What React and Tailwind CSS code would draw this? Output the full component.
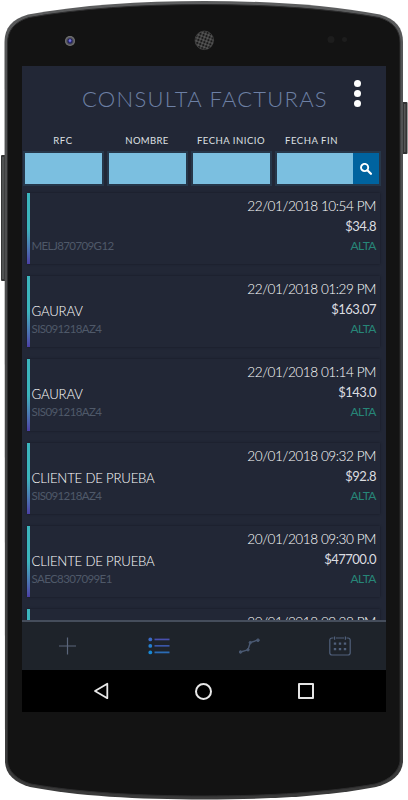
import clsx from "clsx";

const filters = [
  { label: "RFC", box: "w-[81px]", text: "w-[80px] tracking-[0.7px]" },
  { label: "NOMBRE", box: "w-[81px]", text: "w-[80px] tracking-[0.35px]" },
  { label: "FECHA INICIO", box: "w-[81px]", text: "w-[80px] tracking-[0.5px]" },
  { label: "FECHA FIN", box: "w-[106px]", text: "w-[73px] tracking-[0.55px]" },
];

const invoices = [
  { id: 1, name: "", rfc: "MELJ870709G12", date: "22/01/2018 10:54 PM", amount: "$34.8" },
  { id: 2, name: "GAURAV", rfc: "SIS091218AZ4", date: "22/01/2018 01:29 PM", amount: "$163.07" },
  { id: 3, name: "GAURAV", rfc: "SIS091218AZ4", date: "22/01/2018 01:14 PM", amount: "$143.0" },
  { id: 4, name: "CLIENTE DE PRUEBA", rfc: "SIS091218AZ4", date: "20/01/2018 09:32 PM", amount: "$92.8" },
  { id: 5, name: "CLIENTE DE PRUEBA", rfc: "SAEC8307099E1", date: "20/01/2018 09:30 PM", amount: "$47700.0" },
  { id: 6, date: "20/01/2018 09:28 PM" },
];

const BODY =
  "M4.5 42 C4.5 28 12 19 28 14.5 C80 5 140 1 204 1 C268 1 328 5 380 14.5 C396 19 403 28 403 42 L403 762 C402 774 392 783 376 787 C330 796 270 799.5 204 799.5 C138 799.5 76 796 30 787 C15 783 5.5 774 5 762 Z";

const PhoneFrame = () => (
  <svg className="absolute inset-0" width="408" height="800" viewBox="0 0 408 800">
    <defs>
      <linearGradient id="rim" x1="0" y1="0" x2="0" y2="1">
        <stop offset="0" stopColor="#5c5d5e" />
        <stop offset="0.08" stopColor="#535455" />
        <stop offset="1" stopColor="#3a3a3a" />
      </linearGradient>
      <pattern id="mesh" width="3.2" height="3.2" patternUnits="userSpaceOnUse" patternTransform="rotate(20)">
        <rect width="3.2" height="3.2" fill="#565656" />
        <circle cx="1.6" cy="1.6" r="1.25" fill="#191919" />
      </pattern>
      <radialGradient id="lens">
        <stop offset="0" stopColor="#5a5ad0" />
        <stop offset="0.4" stopColor="#20205c" />
        <stop offset="0.65" stopColor="#515156" />
        <stop offset="1" stopColor="#808080" />
      </radialGradient>
    </defs>
    <rect x="1" y="155" width="5" height="126" rx="1" fill="#343535" />
    <rect x="2" y="157" width="2" height="122" fill="#505252" />
    <rect x="402" y="102" width="5.5" height="52" rx="1" fill="#343434" />
    <rect x="404" y="104" width="1.5" height="48" fill="#555" />
    <path d={BODY} fill="url(#rim)" />
    <path
      d="M7.5 43 C7.5 31 14 22 29 17.5 C80 8.5 140 4.5 204 4.5 C268 4.5 328 8.5 379 17.5 C394 22 400 31 400 43 L400 761 C399 771 390 780 375 784 C330 792 270 796 204 796 C138 796 76 792 31 784 C17 780 8 771 7.5 761 Z"
      fill="#131313"
      stroke="#2c2c2d"
      strokeWidth="1"
    />
    <circle cx="70" cy="41" r="5" fill="url(#lens)" />
    <circle cx="70" cy="40.5" r="1.2" fill="#7474dc" />
    <circle cx="204.3" cy="40.3" r="9.3" fill="url(#mesh)" stroke="#4a4a4a" strokeWidth="0.6" />
    <circle cx="331" cy="39.5" r="3.5" fill="#1d1d1d" />
    <circle cx="344.5" cy="39.5" r="2.5" fill="#1d1d1d" />
  </svg>
);

const Header = () => (
  <header className="flex h-[66px] shrink-0 pl-[60px] pr-[25px]">
    <h1 className="flex-1 whitespace-nowrap pt-[18px] text-[22px] font-light leading-[30px] tracking-[1.25px] text-[#6d80a5]">
      CONSULTA FACTURAS
    </h1>
    <button className="flex flex-col gap-[3px] pt-[14px]">
      <span className="size-[7px] rounded-full bg-white" />
      <span className="size-[7px] rounded-full bg-white" />
      <span className="size-[7px] rounded-full bg-white" />
    </button>
  </header>
);

const Filters = () => (
  <div className="flex shrink-0 gap-[3px] pl-[1px]">
    {filters.map(({ label, box, text }) => (
      <div key={label} className={clsx("flex shrink-0 flex-col", box)}>
        <label
          className={clsx(
            "h-[19px] whitespace-nowrap text-center text-[9.5px] leading-[17px] text-[#dfe0e3]",
            text
          )}
        >
          {label}
        </label>
        <div className="flex h-[35px] border-2 border-[#26374a] bg-[#7bbfe0]">
          {label === "FECHA FIN" && (
            <button className="ml-auto flex w-[26px] items-center justify-center bg-[#00639f]">
              <svg width="12" height="12" viewBox="0 0 12 12" fill="none" stroke="#fff">
                <circle cx="4.6" cy="4.5" r="3.6" strokeWidth="1.9" />
                <path d="M7.4 7.3 L10.9 10.7" strokeWidth="2.3" strokeLinecap="round" />
              </svg>
            </button>
          )}
        </div>
      </div>
    ))}
  </div>
);

const InvoiceCard = ({ invoice }) => (
  <div className="flex h-[71.2px] shrink-0 shadow-[0_0_2px_#141824]">
    <div className="w-[3px] shrink-0 bg-linear-to-b from-[#3bb5bd] from-50% to-[#4b3fa5]" />
    <div className="flex flex-1 justify-between pl-[1.5px] pr-[4px]">
      <div className="flex flex-col pt-[26px]">
        <span className="h-[18px] text-[13.2px] font-light leading-[18px] tracking-[-0.2px] text-white">
          {invoice.name}
        </span>
        <span className="h-[16px] text-[11.5px] leading-[17px] tracking-[-0.6px] text-[#4f5969]">
          {invoice.rfc}
        </span>
      </div>
      <div className="flex flex-col items-end pt-[4px] text-white">
        <span className="text-[13.6px] font-light leading-[19px] tracking-[-0.45px]">{invoice.date}</span>
        <span className="text-[13px] leading-[20px] tracking-[-0.5px] text-[#dcdde0]">{invoice.amount}</span>
        {invoice.amount && (
          <span className="text-[12px] leading-[20px] tracking-[-0.5px] text-[#278678]">ALTA</span>
        )}
      </div>
    </div>
  </div>
);

const TabBar = () => (
  <nav className="grid h-[50px] shrink-0 grid-cols-4 place-items-center border-t-2 border-[#454d5b] bg-[#1e232a]">
    <svg width="18" height="18" viewBox="0 0 18 18" stroke="#5b667b" strokeWidth="1.2">
      <path d="M8.5 0.5 V17.5 M0 9 H17" />
    </svg>
    <svg width="22" height="18" viewBox="0 0 22 18">
      <circle cx="2.3" cy="2.4" r="1.9" fill="#3b6bc6" />
      <circle cx="2.3" cy="8.9" r="1.9" fill="#247fd0" />
      <circle cx="2.3" cy="15.4" r="1.9" fill="#1888d5" />
      <rect x="6.5" y="1.6" width="15" height="1.7" fill="#484fad" />
      <rect x="6.5" y="8.1" width="15" height="1.5" fill="#3e5cb5" />
      <rect x="6.5" y="14.5" width="15" height="1.8" fill="#2b6cb5" />
    </svg>
    <svg width="22" height="16" viewBox="0 0 22 16" fill="#4b5a73" stroke="#4b5a73">
      <path d="M1.5 14 L9 11.8 L11.3 4.5 L19 2" fill="none" strokeWidth="1.4" />
      <circle cx="1.5" cy="14" r="1.3" />
      <circle cx="9" cy="11.8" r="1.2" />
      <circle cx="11.3" cy="4.6" r="1.2" />
      <circle cx="19" cy="2.2" r="1.3" />
    </svg>
    <svg className="-ml-[1px] -mt-[1px]" width="22" height="20" viewBox="0 0 22 20" fill="none" stroke="#50607b" strokeWidth="1.2">
      <path d="M4.5 2 H3 Q0.8 2 0.8 4.2 V16.8 Q0.8 19 3 19 H19 Q21.2 19 21.2 16.8 V4.2 Q21.2 2 19 2 H17.5 M7 2 H15 M5.6 0.5 V3.8 M16.4 0.5 V3.8" />
      <path d="M4.8 7.7 H7.2 M9.8 7.7 H12.2 M14.8 7.7 H17.2 M4.8 13.2 H7.2 M9.8 13.2 H12.2 M14.8 13.2 H17.2" strokeWidth="2.3" />
    </svg>
  </nav>
);

const SystemBar = () => (
  <div className="flex h-[42px] shrink-0 items-center bg-black">
    <svg className="ml-[71px]" width="16" height="18" viewBox="0 0 16 18">
      <path d="M14.3 1.8 V16.2 L2 9 Z" fill="none" stroke="#e8e8e8" strokeWidth="1.8" strokeLinejoin="round" />
    </svg>
    <div className="ml-[86px] size-[17px] rounded-full border-2 border-[#e8e8e8]" />
    <div className="ml-[86px] size-[16px] rounded-[1px] border-2 border-[#e4e4e4]" />
  </div>
);

export default function App() {
  return (
    <div className="relative h-[800px] w-[408px] overflow-hidden bg-white pl-[22px] pt-[66px] font-['Lato',sans-serif]">
      <PhoneFrame />
      <div className="relative flex h-[646px] w-[364px] flex-col overflow-hidden bg-[#222736]">
        <Header />
        <Filters />
        <main className="flex min-h-0 flex-1 flex-col gap-[12px] overflow-hidden pl-[5px] pr-[6px] pt-[7px]">
          {invoices.map((invoice) => (
            <InvoiceCard key={invoice.id} invoice={invoice} />
          ))}
        </main>
        <TabBar />
        <SystemBar />
      </div>
    </div>
  );
}
